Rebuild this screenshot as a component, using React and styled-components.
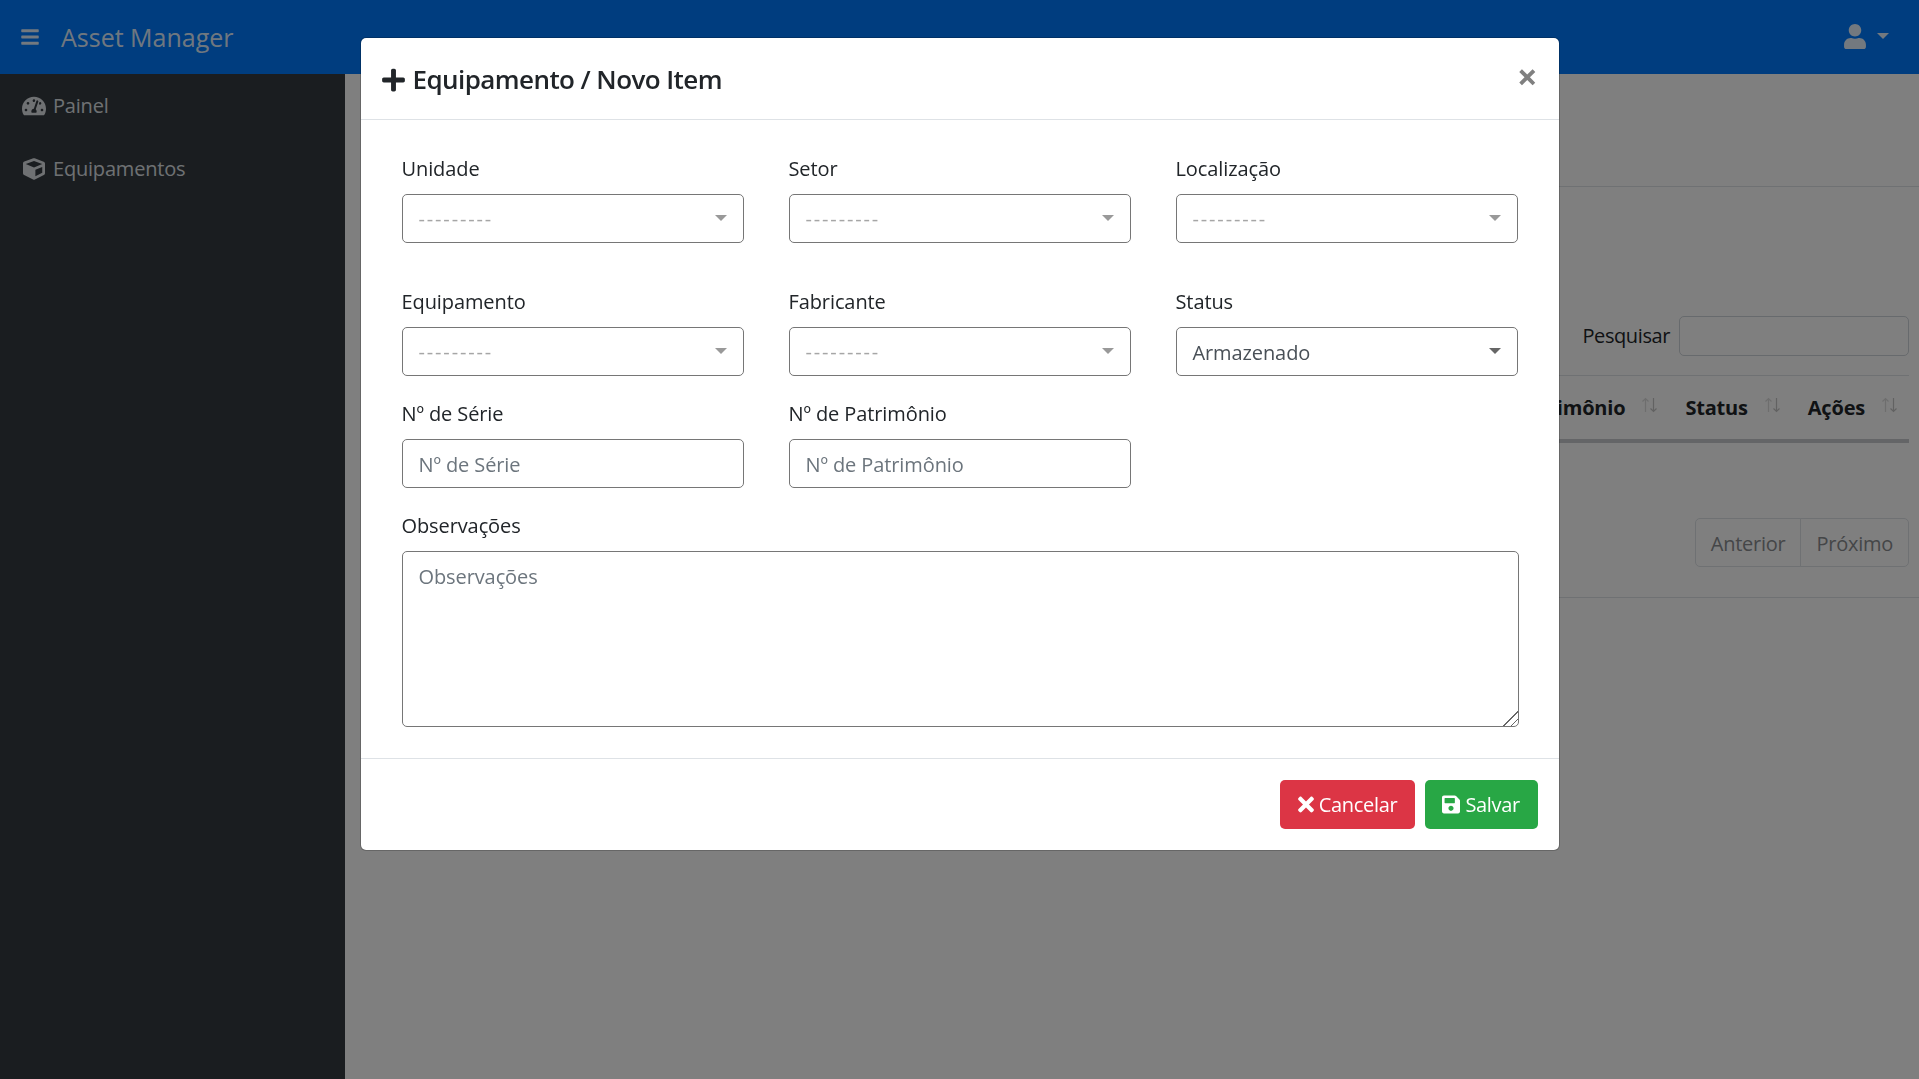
import React from 'react';
import styled, { createGlobalStyle } from 'styled-components';
import { FaBars, FaCube, FaPlus, FaSave, FaTachometerAlt, FaTimes, FaUser } from 'react-icons/fa';

const FONT = '"Open Sans", "Noto Sans", "Liberation Sans", sans-serif';

const GlobalStyle = createGlobalStyle`
  html, body { margin: 0; padding: 0; height: 100%; overflow: hidden; }
  body { font-family: ${FONT}; font-size: 20px; color: #212529; background: #fff; letter-spacing: -0.1px; }
  * { box-sizing: border-box; }
`;

const Page = styled.div`
  height: 100vh;
  display: flex;
  flex-direction: column;
`;

const Navbar = styled.header`
  height: 74px;
  flex-shrink: 0;
  background: #007bff;
  display: flex;
  align-items: center;
  padding: 0 30px 0 20px;
  color: rgba(255, 255, 255, 0.9);
`;

const Brand = styled.span`
  font-size: 25px;
  margin-left: 21px;
  letter-spacing: 0;
`;

const UserMenu = styled.div`
  margin-left: auto;
  display: flex;
  align-items: center;
  gap: 11px;
  margin-top: -2px;
  svg { width: 22px; }
`;

const Caret = styled.span`
  width: 0;
  height: 0;
  border-left: 6px solid transparent;
  border-right: 6px solid transparent;
  border-top: 6px solid ${(p) => p.$color || 'currentColor'};
`;

const Columns = styled.div`
  flex: 1;
  display: flex;
  min-height: 0;
`;

const Sidebar = styled.nav`
  width: 345px;
  flex-shrink: 0;
  background: #343a40;
`;

const SideItem = styled.a`
  height: 63px;
  display: flex;
  align-items: center;
  gap: 7px;
  padding-left: 22px;
  color: #dfe2e6;
  font-size: 20px;
  letter-spacing: -0.2px;
  svg { width: 24px; }
`;

const Main = styled.main`
  flex: 1;
  min-width: 0;
  padding-left: 20px;
`;

const ContentHeader = styled.div`
  height: 113px;
  border-bottom: 1px solid #dee2e6;
`;

const CardBody = styled.section`
  height: 411px;
  padding: 129px 10px 0 0;
  border-bottom: 1px solid #dee2e6;
`;

const SearchRow = styled.div`
  height: 59px;
  display: flex;
  justify-content: flex-end;
  align-items: flex-start;
  gap: 9px;
  line-height: 40px;
  letter-spacing: -0.4px;
`;

const SearchInput = styled.div`
  width: 230px;
  height: 40px;
  border: 1px solid #ced4da;
  border-radius: 5px;
`;

const TableHead = styled.div`
  height: 68px;
  display: flex;
  justify-content: flex-end;
  align-items: center;
  gap: 27px;
  padding-right: 11px;
  border-top: 1px solid #dee2e6;
  border-bottom: 4px solid #c8cbcf;
  font-weight: 700;
  letter-spacing: -0.2px;
`;

const HeadCell = styled.div`
  display: flex;
  align-items: center;
  gap: 16px;
  white-space: nowrap;
`;

const SortIcon = styled.svg`
  width: 17px;
  height: 16px;
  margin-top: -5px;
  fill: none;
  stroke: #c4c4c4;
  stroke-width: 1.2;
`;

const Pager = styled.div`
  display: flex;
  justify-content: flex-end;
  margin-top: 75px;
  letter-spacing: -0.25px;
`;

const PageLink = styled.span`
  height: 49px;
  line-height: 49px;
  padding: 0 15px;
  border: 1px solid #dee2e6;
  color: #8a8d90;
  margin-left: -1px;
  border-radius: ${(p) => (p.$first ? '5px 0 0 5px' : '0 5px 5px 0')};
`;

const Backdrop = styled.div`
  position: fixed;
  inset: 0;
  background: rgba(0, 0, 0, 0.5);
  display: flex;
  justify-content: center;
  align-items: flex-start;
  padding-top: 37px;
`;

const Modal = styled.div`
  width: 1200px;
  height: 814px;
  background: #fff;
  border: 1px solid rgba(0, 0, 0, 0.2);
  background-clip: padding-box;
  border-radius: 6px;
  display: flex;
  flex-direction: column;
`;

const ModalHeader = styled.div`
  height: 82px;
  flex-shrink: 0;
  border-bottom: 1px solid #dee2e6;
  display: flex;
  align-items: center;
  padding: 0 21px;
`;

const Title = styled.h5`
  margin: 2px 0 0;
  font-size: 26px;
  font-weight: 600;
  letter-spacing: -0.57px;
  line-height: 1.5;
  display: flex;
  align-items: center;
  gap: 8px;
  svg { width: 23px; }
`;

const CloseButton = styled.button`
  margin-left: auto;
  margin-top: -3px;
  border: 0;
  padding: 0;
  background: none;
  font-family: ${FONT};
  font-size: 36px;
  font-weight: 700;
  line-height: 1;
  color: #808080;
`;

const ModalBody = styled.div`
  flex: 1;
  padding: 33px 41px 0;
`;

const FormGrid = styled.div`
  display: grid;
  grid-template-columns: repeat(3, 342px);
  column-gap: 45px;
`;

const Field = styled.div`
  margin-bottom: ${(p) => p.$gap || 22}px;
  grid-column: ${(p) => (p.$wide ? '1 / -1' : 'auto')};
`;

const Label = styled.label`
  display: block;
  height: 31px;
  line-height: 31px;
  margin-bottom: 10px;
`;

const SelectBox = styled.div`
  height: 49px;
  border: 1px solid #767676;
  border-radius: 5px;
  display: flex;
  align-items: center;
  justify-content: space-between;
  padding: 0 16px 2px 16px;
  color: ${(p) => (p.$empty ? '#a6a6a6' : '#495057')};
  letter-spacing: ${(p) => (p.$empty ? '1.85px' : 'inherit')};
`;

const SelectText = styled.span`
  margin-top: ${(p) => (p.$empty ? 1 : 3)}px;
`;

const Input = styled.input`
  display: block;
  width: 100%;
  height: 49px;
  border: 1px solid #767676;
  border-radius: 5px;
  padding: 2px 16px 0;
  font: inherit;
  letter-spacing: inherit;
  color: #495057;
  &::placeholder { color: #6c757d; opacity: 1; }
`;

const TextArea = styled.textarea`
  display: block;
  width: 1117px;
  height: 176px;
  border: 1px solid #767676;
  border-radius: 5px;
  padding: 10px 16px;
  font: inherit;
  letter-spacing: inherit;
  line-height: 1.5;
  &::placeholder { color: #6c757d; opacity: 1; }
  &::-webkit-resizer {
    background: linear-gradient(
      135deg,
      transparent 50%, #666 50%, #666 56%,
      transparent 56%, transparent 74%, #666 74%, #666 80%, transparent 80%
    );
  }
`;

const ModalFooter = styled.div`
  height: 92px;
  flex-shrink: 0;
  border-top: 1px solid #dee2e6;
  display: flex;
  justify-content: flex-end;
  align-items: center;
  gap: 10px;
  padding: 0 21px 1px 0;
`;

const Button = styled.button`
  height: 49px;
  padding: 0 17.5px;
  border: 0;
  border-radius: 5px;
  background: ${(p) => p.$bg};
  color: #fff;
  font: inherit;
  letter-spacing: -0.3px;
  display: flex;
  align-items: center;
  gap: 5px;
  svg { width: ${(p) => p.$iconWidth}px; }
`;

const selectFields = [
  { label: 'Unidade', gap: 43 },
  { label: 'Setor', gap: 43 },
  { label: 'Localização', gap: 43 },
  { label: 'Equipamento' },
  { label: 'Fabricante' },
  { label: 'Status', value: 'Armazenado' },
];

const SortArrows = () => (
  <SortIcon viewBox="0 0 17 16">
    <path d="M4.5 15V1.5M1.5 4.5l3-3 3 3" opacity="0.6" />
    <path d="M12.5 1v13.5M9.5 11.5l3 3 3-3" />
  </SortIcon>
);

const App = () => (
  <>
    <GlobalStyle />
    <Page>
      <Navbar>
        <FaBars size={20} />
        <Brand>Asset Manager</Brand>
        <UserMenu>
          <FaUser size={25} />
          <Caret />
        </UserMenu>
      </Navbar>
      <Columns>
        <Sidebar>
          <SideItem><FaTachometerAlt size={24} />Painel</SideItem>
          <SideItem><FaCube size={22} />Equipamentos</SideItem>
        </Sidebar>
        <Main>
          <ContentHeader />
          <CardBody>
            <SearchRow>
              <span>Pesquisar</span>
              <SearchInput />
            </SearchRow>
            <TableHead>
              <HeadCell>Nº de Patrimônio<SortArrows /></HeadCell>
              <HeadCell>Status<SortArrows /></HeadCell>
              <HeadCell>Ações<SortArrows /></HeadCell>
            </TableHead>
            <Pager>
              <PageLink $first>Anterior</PageLink>
              <PageLink>Próximo</PageLink>
            </Pager>
          </CardBody>
        </Main>
      </Columns>
    </Page>
    <Backdrop>
      <Modal>
        <ModalHeader>
          <Title><FaPlus size={26} />Equipamento / Novo Item</Title>
          <CloseButton>×</CloseButton>
        </ModalHeader>
        <ModalBody>
          <FormGrid>
            {selectFields.map((f) => (
              <Field key={f.label} $gap={f.gap}>
                <Label>{f.label}</Label>
                <SelectBox $empty={!f.value}>
                  <SelectText $empty={!f.value}>{f.value || '---------'}</SelectText>
                  <Caret $color={f.value ? '#666' : '#999'} />
                </SelectBox>
              </Field>
            ))}
            <Field>
              <Label>Nº de Série</Label>
              <Input placeholder="Nº de Série" />
            </Field>
            <Field>
              <Label>Nº de Patrimônio</Label>
              <Input placeholder="Nº de Patrimônio" />
            </Field>
            <div />
            <Field $wide $gap={0}>
              <Label>Observações</Label>
              <TextArea placeholder="Observações" />
            </Field>
          </FormGrid>
        </ModalBody>
        <ModalFooter>
          <Button $bg="#dc3545" $iconWidth={16}><FaTimes size={23} />Cancelar</Button>
          <Button $bg="#28a745" $iconWidth={18}><FaSave size={21} />Salvar</Button>
        </ModalFooter>
      </Modal>
    </Backdrop>
  </>
);

export default App;
